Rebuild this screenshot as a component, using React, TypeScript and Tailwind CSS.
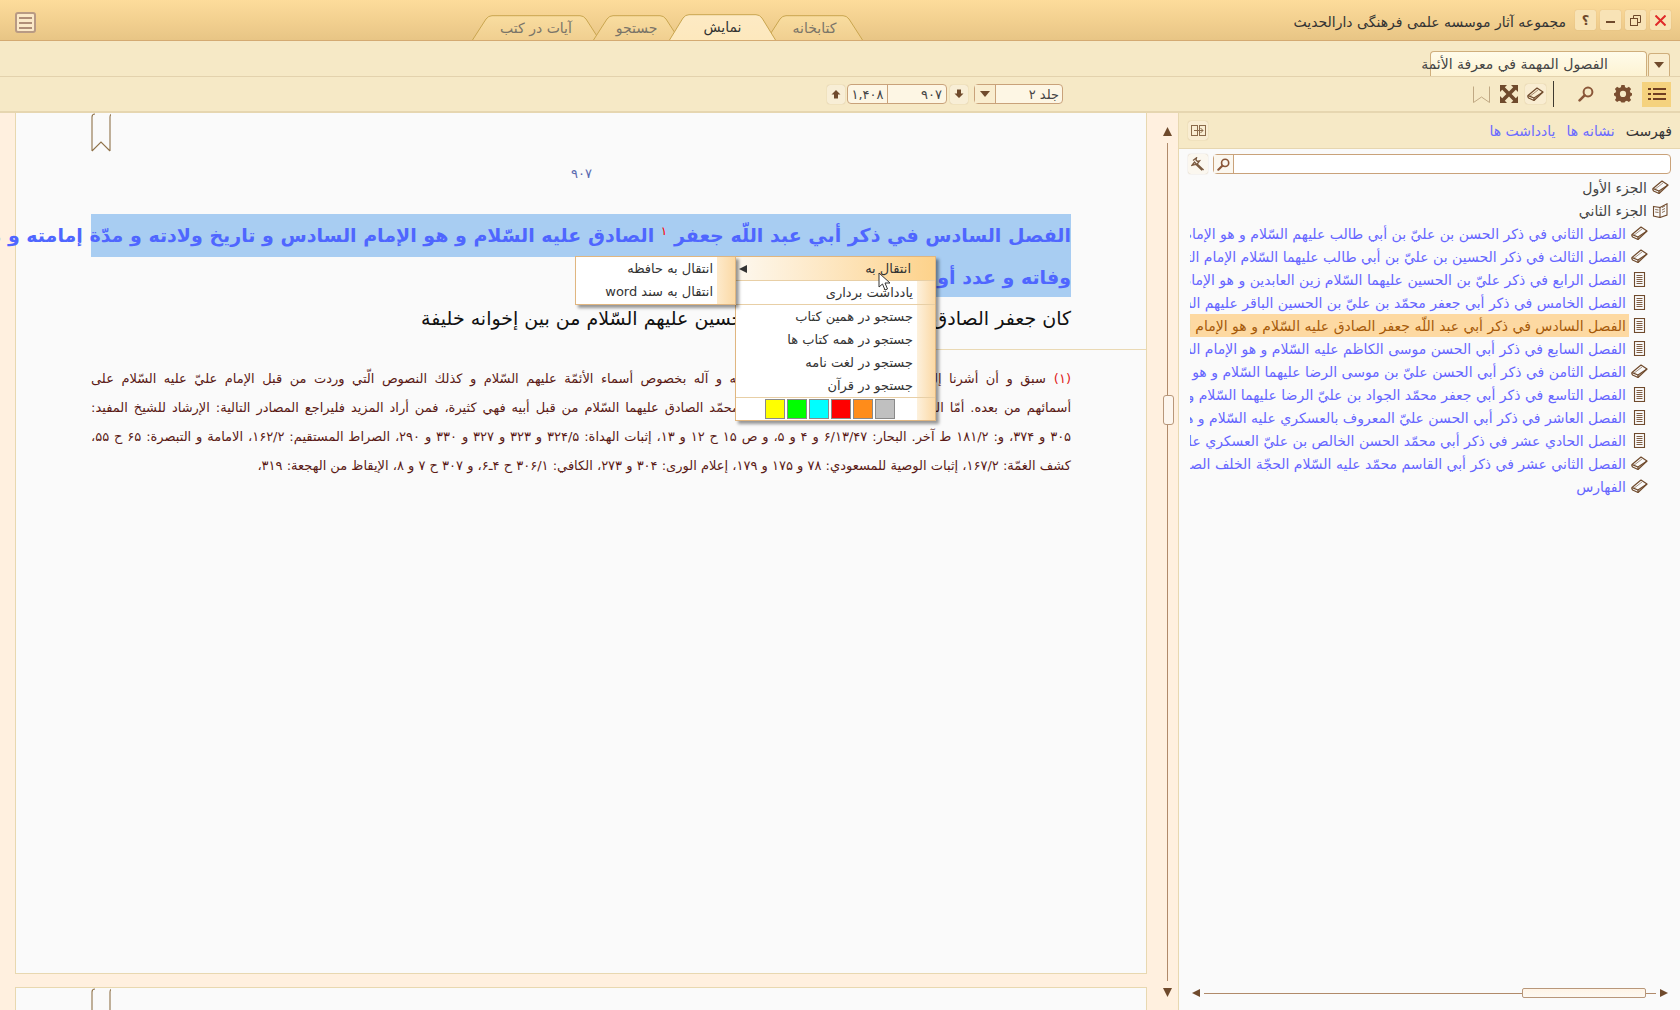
import React from "react";

const BROWN = "#6f4a2c";

function Book({ className = "" }: { className?: string }) {
  return (
    <svg width="17" height="15" viewBox="0 0 17 15" className={className} fill="none" stroke={BROWN} strokeWidth="1.2" strokeLinejoin="round">
      <path d="M1 8.5 L10 1 L16 5 L7 13.5 L1.6 11 Q0.4 9.8 1 8.5 Z" />
      <path d="M1.2 8.6 L7 11 L16 5" />
      <path d="M7 11 L7 13.5" />
      <path d="M3 9.2 L11 3" strokeWidth="0.6" />
    </svg>
  );
}

function Doc() {
  return (
    <svg width="17" height="15" viewBox="0 0 17 15" fill="none" stroke={BROWN} strokeWidth="1.1">
      <rect x="3.5" y="0.5" width="10" height="14" />
      <path d="M5.5 3.5H11.5M5.5 5.5H11.5M5.5 7.5H11.5M5.5 9.5H11.5M5.5 11.5H11.5" strokeWidth="0.9" />
    </svg>
  );
}

function OpenBook() {
  return (
    <svg width="17" height="15" viewBox="0 0 17 15" fill="none" stroke={BROWN} strokeWidth="1.1">
      <path d="M1.5 3.5 L8 4.5 L8 14.5 L1.5 13 Z" />
      <path d="M8 4.5 L15 0.8 L15 12 L8 14.5" />
      <path d="M10 4.5L13 3M10 7L13 5.5M10 9.5L13 8M3.2 6.5L6.5 7M3.2 9L6.5 9.5" strokeWidth="0.8" />
    </svg>
  );
}

function Mag({ size = 16, color = "#8a5638" }: { size?: number; color?: string }) {
  return (
    <svg width={size} height={size} viewBox="0 0 16 16" fill="none" stroke={color}>
      <circle cx="10" cy="6" r="4.4" strokeWidth="2" />
      <path d="M6.6 9.4 L1.6 14.4" strokeWidth="2.6" strokeLinecap="round" />
    </svg>
  );
}

function Tri({ dir, size = 8, color = BROWN }: { dir: "up" | "down" | "left" | "right"; size?: number; color?: string }) {
  const d = { up: "M0 8H8L4 0Z", down: "M0 0H8L4 8Z", left: "M8 0V8L0 4Z", right: "M0 0V8L8 4Z" }[dir];
  return (
    <svg width={size} height={size} viewBox="0 0 8 8" fill={color}>
      <path d={d} />
    </svg>
  );
}

function ArrowBtn({ dir }: { dir: "up" | "down" }) {
  return (
    <div className="flex h-[19px] w-[18px] items-center justify-center rounded-[3px] bg-[#f8eed6] shadow-[0_0_1px_rgba(150,110,60,0.5)]">
      <svg width="10" height="10" viewBox="0 0 10 10" fill="#6f4a2c">
        <path d={dir === "up" ? "M5 1 L9.5 5.5 H7 V9.5 H3 V5.5 H0.5 Z" : "M5 9 L9.5 4.5 H7 V0.5 H3 V4.5 H0.5 Z"} />
      </svg>
    </div>
  );
}

function Tab({ w, active, label, cls }: { w: number; active?: boolean; label: string; cls: string }) {
  const h = active ? 26 : 25;
  const path = `M0.5 ${h} L${14} 4 Q16.5 0.7 20 0.7 L${w - 20} 0.7 Q${w - 16.5} 0.7 ${w - 14} 4 L${w - 0.5} ${h}`;
  const gid = active ? "tabA" : "tabI";
  return (
    <div className={`relative flex items-center justify-center ${cls}`} style={{ width: w, height: h }}>
      <svg width={w} height={h} className="absolute inset-0">
        <defs>
          <linearGradient id={gid} x1="0" y1="0" x2="0" y2="1">
            <stop offset="0" stopColor={active ? "#fdeac4" : "#f9dda0"} />
            <stop offset="1" stopColor={active ? "#fde8bd" : "#f0cf90"} />
          </linearGradient>
        </defs>
        <path d={path} fill={`url(#${gid})`} stroke="#c9a54f" strokeWidth="1" />
      </svg>
      <span dir="rtl" className={`relative text-[14px] leading-none ${active ? "text-[#333333]" : "text-[#7a7468]"}`}>
        {label}
      </span>
    </div>
  );
}

function WinBtn({ children }: { children: React.ReactNode }) {
  return (
    <div className="flex h-[20px] w-[21px] items-center justify-center rounded-[2px] bg-[#f8e3b6] shadow-[0_0_1px_rgba(150,110,60,0.4)]">
      {children}
    </div>
  );
}

const rows: [string, "book" | "doc"][] = [
  ["الفصل الثاني في ذكر الحسن بن عليّ بن أبي طالب عليهم السّلام و هو الإمام الثاني", "book"],
  ["الفصل الثالث في ذكر الحسين بن عليّ بن أبي طالب عليهما السّلام الإمام الثالث", "book"],
  ["الفصل الرابع في ذكر عليّ بن الحسين عليهما السّلام زين العابدين و هو الإمام الرابع", "doc"],
  ["الفصل الخامس في ذكر أبي جعفر محمّد بن عليّ بن الحسين الباقر عليهم السّلام", "doc"],
  ["الفصل السادس في ذكر أبي عبد اللّه جعفر الصادق عليه السّلام و هو الإمام السادس", "doc"],
  ["الفصل السابع في ذكر أبي الحسن موسى الكاظم عليه السّلام و هو الإمام السابع", "doc"],
  ["الفصل الثامن في ذكر أبي الحسن عليّ بن موسى الرضا عليهما السّلام و هو الإمام الثامن", "book"],
  ["الفصل التاسع في ذكر أبي جعفر محمّد الجواد بن عليّ الرضا عليهما السّلام و هو الإمام التاسع", "doc"],
  ["الفصل العاشر في ذكر أبي الحسن عليّ المعروف بالعسكري عليه السّلام و هو الإمام العاشر", "doc"],
  ["الفصل الحادي عشر في ذكر أبي محمّد الحسن الخالص بن عليّ العسكري عليه السّلام", "doc"],
  ["الفصل الثاني عشر في ذكر أبي القاسم محمّد عليه السّلام الحجّة الخلف الصالح", "book"],
  ["الفهارس", "book"],
];

const notes = [
  "سبق و أن أشرنا إلى ما ورد عن النبيّ صلّى الله عليه و آله بخصوص أسماء الأئمّة عليهم السّلام و كذلك النصوص الّتي وردت من قبل الإمام عليّ عليه السّلام على",
  "أسمائهم من بعده. أمّا النصوص الواردة في إمامة جعفر بن محمّد الصادق عليهما السّلام من قبل أبيه فهي كثيرة، فمن أراد المزيد فليراجع المصادر التالية: الإرشاد للشيخ المفيد:",
  "٣٠۵ و ٣٧۴، و: ١٨١/٢ ط آخر. البحار: ۶/١٣/۴٧ و ۴ و ۵، و ص ١۵ ح ١٢ و ١٣، إثبات الهداة: ٣٢۴/۵ و ٣٢٣ و ٣٢٧ و ٣٣٠ و ٢٩٠، الصراط المستقيم: ١۶٢/٢، الامامة و التبصرة: ۶۵ ح ۵۵،",
  "كشف الغمّة: ١۶٧/٢، إثبات الوصية للمسعودي: ٧٨ و ١٧۵ و ١٧٩، إعلام الورى: ٣٠۴ و ٢٧٣، الكافي: ٣٠۶/١ ح ۴ـ۶، و ٣٠٧ ح ٧ و ٨، الإيقاظ من الهجعة: ٣١٩،",
];

function MenuRow({ label, h = "h-[23px]" }: { label: string; h?: string }) {
  return (
    <div className={`flex ${h} items-center justify-end pr-[22px]`}>
      <span dir="rtl" className="whitespace-nowrap text-[13px] leading-none text-[#333333]">
        {label}
      </span>
    </div>
  );
}

export default function App() {
  return (
    <div className="relative flex h-[1010px] w-[1680px] flex-col overflow-hidden bg-[#fff0df] font-['DejaVu_Sans',sans-serif]">
      {/* Title bar */}
      <div className="flex h-[41px] shrink-0 items-end border-b border-[#d4aa72] bg-gradient-to-b from-[#fddc9b] to-[#e8c585]">
        <div className="mb-[7px] ml-[15px] flex h-[21px] w-[21px] flex-col justify-center gap-[3px] rounded-[3px] border-2 border-[#b89a84] bg-[#fbe9c8] px-[2px]">
          <div className="h-[2px] bg-[#b08e78]" />
          <div className="h-[2px] bg-[#b08e78]" />
          <div className="h-[2px] bg-[#b08e78]" />
        </div>
        <div className="ml-[436px] flex items-end">
          <Tab w={128} label="آیات در کتب" cls="" />
          <Tab w={87} label="جستجو" cls="-ml-[7px]" />
          <Tab w={107} label="نمایش" active cls="z-10 -ml-[11px]" />
          <Tab w={97} label="کتابخانه" cls="-ml-[10px]" />
        </div>
        <div className="flex-1" />
        <div dir="rtl" className="mb-[11px] mr-[9px] whitespace-nowrap text-[14px] leading-none text-[#333333]">
          مجموعه آثار موسسه علمی فرهنگی دارالحدیث
        </div>
        <div className="mb-[10px] mr-[9px] flex gap-[4px]">
          <WinBtn>
            <span className="text-[13px] font-bold leading-none text-[#6f4a2c]">؟</span>
          </WinBtn>
          <WinBtn>
            <div className="mt-[3px] h-[2px] w-[9px] bg-[#6f4a2c]" />
          </WinBtn>
          <WinBtn>
            <svg width="11" height="11" viewBox="0 0 11 11" fill="none" stroke="#6f4a2c">
              <rect x="0.5" y="3.5" width="7" height="7" />
              <path d="M3.5 3.5V0.5H10.5V7.5H7.5" />
            </svg>
          </WinBtn>
          <WinBtn>
            <svg width="11" height="11" viewBox="0 0 11 11" stroke="#e02a2a" strokeWidth="2">
              <path d="M0.5 0.5L10.5 10.5M10.5 0.5L0.5 10.5" />
            </svg>
          </WinBtn>
        </div>
      </div>

      {/* Document tab row */}
      <div className="flex h-[36px] shrink-0 items-end justify-end border-b border-[#e3d2ad] bg-[#f6e9c6] pr-[10px]">
        <div className="flex h-[25px] w-[217px] items-center justify-end rounded-t-[4px] border border-b-0 border-[#cfae7c] bg-gradient-to-b from-[#fffbea] to-[#fdf3d3] pr-[38px]">
          <span dir="rtl" className="whitespace-nowrap text-[14px] leading-none text-[#444444]">
            الفصول المهمة في معرفة الأئمة
          </span>
        </div>
        <div className="ml-[1px] flex h-[23px] w-[22px] items-center justify-center rounded-t-[3px] border border-b-0 border-[#cfae7c] bg-[#f9edcf]">
          <svg width="10" height="6" viewBox="0 0 10 6" fill="#6f4a2c">
            <path d="M0 0H10L5 6Z" />
          </svg>
        </div>
      </div>

      {/* Toolbar */}
      <div className="flex h-[36px] shrink-0 items-center border-b-2 border-[#e6d6b0] bg-[#f6e9c6] pl-[827px] pr-[9px]">
        <ArrowBtn dir="up" />
        <div className="ml-[2px] flex h-[20px] w-[100px] items-center rounded-[4px] border border-[#c9a27a] bg-[#fdf6e4] text-[13px] leading-none text-[#444444]">
          <div className="flex h-full w-[40px] items-center justify-center border-r border-[#c9a27a]">١,۴٠٨</div>
          <div className="flex-1 pr-[4px] text-right">٩٠٧</div>
        </div>
        <div className="ml-[3px]">
          <ArrowBtn dir="down" />
        </div>
        <div className="ml-[6px] flex h-[20px] w-[89px] items-center rounded-[4px] border border-[#c9a27a] bg-[#fdf6e4]">
          <div className="flex h-full w-[21px] items-center justify-center border-r border-[#c9a27a] bg-[#f9edcf]">
            <svg width="10" height="6" viewBox="0 0 10 6" fill="#6f4a2c">
              <path d="M0 0H10L5 6Z" />
            </svg>
          </div>
          <div dir="rtl" className="flex-1 pr-[3px] text-[13px] leading-none text-[#444444]">
            جلد ٢
          </div>
        </div>
        <div className="flex-1" />
        <svg width="17" height="17" viewBox="0 0 17 17" fill="none" stroke="#c0a883" strokeWidth="1">
          <path d="M0.5 0.5V16.5L8.5 11L16.5 16.5V0.5" />
        </svg>
        <div className="ml-[9px]">
          <svg width="20" height="20" viewBox="0 0 20 20" fill="#6f4a2c">
            <path d="M1 1H8L5.8 3.2L10 7.4L14.2 3.2L12 1H19V8L16.8 5.8L12.6 10L16.8 14.2L19 12V19H12L14.2 16.8L10 12.6L5.8 16.8L8 19H1V12L3.2 14.2L7.4 10L3.2 5.8L1 8Z" />
          </svg>
        </div>
        <div className="ml-[6px] flex h-[20px] w-[21px] items-center justify-center rounded-[3px] bg-[#f9edd2] shadow-[0_0_1px_rgba(150,110,60,0.5)]">
          <Book />
        </div>
        <div className="ml-[7px] h-[26px] w-px bg-[#3f3a30]" />
        <div className="ml-[24px]">
          <Mag />
        </div>
        <div className="ml-[20px]">
          <svg width="18" height="18" viewBox="0 0 18 18" fill="#7a4e30">
            <path
              fillRule="evenodd"
              d="M7.4 0.5H10.6L11.1 2.8L12.9 3.6L14.9 2.3L17.1 4.5L15.8 6.5L16.6 8.3L18 8.8V11.2L16.6 11.7L15.8 13.5L17.1 15.5L14.9 17.7L12.9 16.4L11.1 17.2L10.6 18H7.4L6.9 17.2L5.1 16.4L3.1 17.7L0.9 15.5L2.2 13.5L1.4 11.7L0 11.2V8.8L1.4 8.3L2.2 6.5L0.9 4.5L3.1 2.3L5.1 3.6L6.9 2.8ZM9 6.4A3.1 3.1 0 1 0 9 12.6A3.1 3.1 0 1 0 9 6.4Z"
              transform="translate(0,-0.6)"
            />
          </svg>
        </div>
        <div className="ml-[10px] flex h-[25px] w-[29px] items-center justify-center bg-[#f5d27e]">
          <svg width="18" height="12" viewBox="0 0 18 12" fill="#6f3f22">
            <rect x="0" y="0" width="3" height="2" />
            <rect x="5" y="0" width="13" height="2" />
            <rect x="0" y="5" width="3" height="2" />
            <rect x="5" y="5" width="13" height="2" />
            <rect x="0" y="10" width="3" height="2" />
            <rect x="5" y="10" width="13" height="2" />
          </svg>
        </div>
      </div>

      {/* Main */}
      <div className="flex min-h-0 flex-1">
        <div className="w-[15px] shrink-0" />
        <div className="flex w-[1132px] shrink-0 flex-col gap-[13px]">
          <div className="relative flex h-[861px] shrink-0 flex-col border-x border-b border-[#e8d8b0] bg-[#fafafa]">
            <svg width="20" height="39" viewBox="0 0 20 39" fill="none" stroke="#8f7249" strokeWidth="1.1" className="absolute left-[75px] top-0">
              <path d="M1 38 V4 Q1 1 4 1 M19 38 V4 Q19 1 22 1 M1 38 L10 29 L19 38" />
            </svg>
            <div className="flex h-[101px] shrink-0 items-start justify-center pl-[1px] pt-[54px] text-[13px] leading-none text-[#5a6ab0]">
              ٩٠٧
            </div>
            <div className="px-[75px]">
              <div
                dir="rtl"
                className="h-[43px] whitespace-nowrap bg-[#a8cdf2] text-[19px] font-bold leading-[43px] text-[#4f66ff] [text-align-last:justify]"
              >
                الفصل السادس في ذكر أبي عبد اللّه جعفر <span className="align-super text-[12px] font-normal leading-none text-[#ff0000]">١</span> الصادق عليه السّلام و هو الإمام السادس و تاريخ ولادته و مدّة إمامته و مبلغ عمره و وقت
              </div>
              <div className="ml-auto h-[40px] w-[272px] overflow-hidden bg-[#a8cdf2]">
                <div dir="rtl" className="whitespace-nowrap text-[19px] font-bold leading-[40px] text-[#4f66ff]">
                  وفاته و عدد أولاده و ذكر بعض مناقبه
                </div>
              </div>
              <div
                dir="rtl"
                className="ml-auto mt-[1px] h-[40px] w-[607px] whitespace-nowrap text-[19px] leading-[40px] text-[#111111] [text-align-last:justify]"
              >
                كان جعفر الصادق ابن محمّد بن عليّ بن الحسين عليهم السّلام من بين إخوانه خليفة
              </div>
            </div>
            <div className="ml-auto mt-[11px] h-px w-[360px] bg-[#ead9b4]" />
            <div className="mt-[14px] flex flex-col px-[75px] text-[13px] leading-[29px] text-[#5a1a16]">
              {notes.map((n, i) => (
                <div key={i} dir="rtl" className={`h-[29px] whitespace-nowrap ${i === 3 ? "[text-align-last:right]" : "[text-align-last:justify]"}`}>
                  {i === 0 && <span className="ml-[8px] text-[#e02020]">(١)</span>}
                  {n}
                </div>
              ))}
            </div>
          </div>
          <div className="relative flex-1 border-x border-t border-[#e8d8b0] bg-[#fafafa]">
            <svg width="20" height="23" viewBox="0 0 20 23" fill="none" stroke="#8f7249" strokeWidth="1.1" className="absolute left-[75px] top-0">
              <path d="M1 23 V4 Q1 1 4 1 M19 23 V4 Q19 1 22 1" />
            </svg>
          </div>
        </div>
        <div className="relative flex w-[31px] shrink-0 flex-col items-center pb-[13px] pl-[10px] pt-[14px]">
          <Tri dir="up" size={9} />
          <div className="my-[7px] w-px flex-1 bg-[#b08a6a]" />
          <Tri dir="down" size={9} />
          <div className="absolute left-[16px] top-[282px] h-[30px] w-[11px] rounded-[3px] border border-[#b8977a] bg-[#fdf6ee]" />
        </div>
        <div className="flex w-[502px] shrink-0 flex-col border-l border-[#e8d8b0] bg-[#fafafa]">
          <div className="flex h-[36px] shrink-0 items-center border-b border-[#e6d6b0] bg-[#f6e9c6] pl-[9px] pr-[8px]">
            <div className="flex h-[19px] w-[20px] items-center justify-center rounded-[3px] bg-[#f9edd2] shadow-[0_0_1px_rgba(150,110,60,0.5)]">
              <svg width="15" height="11" viewBox="0 0 15 11" fill="none" stroke="#8a6a4a">
                <rect x="0.5" y="0.5" width="6" height="10" />
                <rect x="8.5" y="0.5" width="6" height="10" />
                <path d="M3 5.5H12M9.5 3L12 5.5L9.5 8" />
              </svg>
            </div>
            <div className="flex-1" />
            <div dir="rtl" className="flex items-center gap-[11px] whitespace-nowrap text-[14px] leading-none text-[#6b6bff]">
              <span className="text-[#333333]">فهرست</span>
              <span>نشانه ها</span>
              <span>یادداشت ها</span>
            </div>
          </div>
          <div className="mt-[5px] flex h-[20px] shrink-0 items-center pl-[9px] pr-[9px]">
            <div className="flex h-[20px] w-[20px] items-center justify-center rounded-[3px] bg-[#fbf7ef] shadow-[0_0_1px_rgba(150,110,60,0.5)]">
              <svg width="14" height="14" viewBox="0 0 14 14" fill="none" stroke="#7a5a40" strokeWidth="1.3">
                <path d="M2 3.5 L5.5 0.8 L5 3 L6.3 4.3 L8.6 3.8 L6.2 7 L12.6 13 M11 13.4 L4.8 7.4 L1 8.3 L3.5 5 Z" />
              </svg>
            </div>
            <div className="ml-[5px] flex h-[20px] flex-1 items-center rounded-[4px] border border-[#c9a27a] bg-white">
              <div className="flex h-full w-[20px] items-center justify-center border-r border-[#c9a27a] bg-[#fbf7ef]">
                <Mag size={13} />
              </div>
            </div>
          </div>
          <div className="mt-[2px] flex shrink-0 flex-col">
            <div className="flex h-[23px] items-center justify-end gap-[5px] pr-[11px]">
              <span dir="rtl" className="text-[14px] leading-none text-[#444444]">الجزء الأول</span>
              <Book />
            </div>
            <div className="flex h-[23px] items-center justify-end gap-[5px] pr-[11px]">
              <span dir="rtl" className="text-[14px] leading-none text-[#444444]">الجزء الثاني</span>
              <OpenBook />
            </div>
            {rows.map(([t, ic], i) => (
              <div key={i} className="flex h-[23px] items-center justify-end pl-[11px] pr-[32px]">
                <div
                  dir="rtl"
                  className={`flex h-[23px] min-w-0 items-center overflow-hidden whitespace-nowrap pr-[3px] text-[14px] leading-none ${
                    i === 4 ? "flex-1 bg-[#fdd9a2] text-[#a55a0a]" : "text-[#6666ff]"
                  }`}
                >
                  {t}
                </div>
                <div className="ml-[2px] shrink-0">{ic === "book" ? <Book /> : <Doc />}</div>
              </div>
            ))}
          </div>
          <div className="mt-auto flex h-[34px] shrink-0 items-center pl-[13px] pr-[12px]">
            <Tri dir="left" size={8} />
            <div className="relative ml-[4px] mr-[4px] flex h-[10px] flex-1 items-center">
              <div className="h-px w-full bg-[#b08a6a]" />
              <div className="absolute left-[318px] top-0 h-[10px] w-[124px] rounded-[2px] border border-[#b8977a] bg-gradient-to-b from-[#fff4e6] to-[#fdf9f2]" />
            </div>
            <Tri dir="right" size={8} />
          </div>
        </div>
      </div>

      {/* Context menu */}
      <div className="absolute left-[735px] top-[256px] z-20 w-[201px] border border-[#e0b680] bg-white shadow-[3px_3px_3px_rgba(0,0,0,0.4)]">
        <div className="absolute bottom-0 right-0 top-0 w-[18px] bg-gradient-to-r from-[#fdf1dd] to-[#fbd9a5]" />
        <div className="relative flex h-[24px] items-center border-b border-[#e8cfa6] bg-gradient-to-r from-[#fdf8ef] to-[#fdd28a]">
          <div className="ml-[3px]">
            <Tri dir="left" size={8} color="#333333" />
          </div>
          <div dir="rtl" className="ml-auto mr-[24px] text-[13px] leading-none text-[#333333]">انتقال به</div>
        </div>
        <div className="relative">
          <MenuRow label="یادداشت برداری" />
        </div>
        <div className="relative border-y border-[#e8cfa6] pt-[0px]">
          <MenuRow label="جستجو در همین کتاب" />
          <MenuRow label="جستجو در همه کتاب ها" />
          <MenuRow label="جستجو در لغت نامه" />
          <MenuRow label="جستجو در قرآن" />
        </div>
        <div className="relative flex h-[22px] items-center gap-[2px] pl-[29px]">
          {["#ffff00", "#00ff00", "#00ffff", "#ff0000", "#ff8c1a", "#c0c0c0"].map((c) => (
            <div key={c} className="h-[20px] w-[20px] border border-[#8a8a8a]" style={{ background: c }} />
          ))}
        </div>
      </div>

      {/* Submenu */}
      <div className="absolute left-[575px] top-[256px] z-30 h-[49px] w-[161px] border border-[#e0b680] bg-white shadow-[3px_3px_3px_rgba(0,0,0,0.4)]">
        <div className="absolute bottom-0 right-0 top-0 w-[18px] bg-gradient-to-r from-[#fdeacb] to-[#fbd9a5]" />
        <div className="relative">
          <MenuRow label="انتقال به حافظه" h="h-[23px]" />
          <MenuRow label="انتقال به سند word" h="h-[23px]" />
        </div>
      </div>

      {/* Cursor */}
      <svg width="14" height="20" viewBox="0 0 14 20" className="absolute left-[878px] top-[272px] z-40">
        <path d="M1 1 V15 L4.5 12 L7 18 L9.5 17 L7 11 L12 11 Z" fill="#ffffff" stroke="#333333" strokeWidth="1" />
      </svg>
    </div>
  );
}
